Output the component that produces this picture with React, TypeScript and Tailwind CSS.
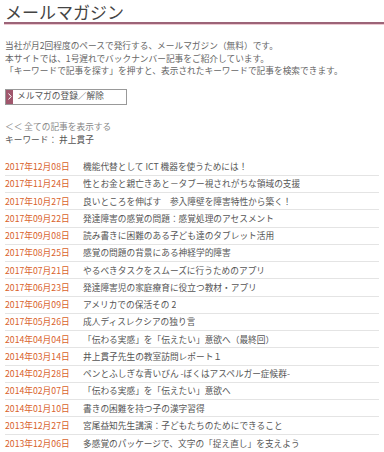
const articles: [string, string][] = [
  ["2017年12月08日", "機能代替として ICT 機器を使うためには！"],
  ["2017年11月24日", "性とお金と親亡きあと－タブー視されがちな領域の支援"],
  ["2017年10月27日", "良いところを伸ばす　参入障壁を障害特性から築く！"],
  ["2017年09月22日", "発達障害の感覚の問題：感覚処理のアセスメント"],
  ["2017年09月08日", "読み書きに困難のある子ども達のタブレット活用"],
  ["2017年08月25日", "感覚の問題の背景にある神経学的障害"],
  ["2017年07月21日", "やるべきタスクをスムーズに行うためのアプリ"],
  ["2017年06月23日", "発達障害児の家庭療育に役立つ教材・アプリ"],
  ["2017年06月09日", "アメリカでの保活その 2"],
  ["2017年05月26日", "成人ディスレクシアの独り言"],
  ["2014年04月04日", "「伝わる実感」を「伝えたい」意欲へ（最終回）"],
  ["2014年03月14日", "井上貫子先生の教室訪問レポート１"],
  ["2014年02月28日", "ペンとふしぎな青いびん -ぼくはアスペルガー症候群-"],
  ["2014年02月07日", "「伝わる実感」を「伝えたい」意欲へ"],
  ["2014年01月10日", "書きの困難を持つ子の漢字習得"],
  ["2013年12月27日", "宮尾益知先生講演：子どもたちのためにできること"],
  ["2013年12月06日", "多感覚のパッケージで、文字の「捉え直し」を支えよう"],
];

export default function App() {
  return (
    <main
      className="min-h-screen bg-white text-[#555] text-[8.7px]"
      style={{ fontFamily: '"Noto Sans CJK JP", "Noto Sans", sans-serif' }}
    >
      <header className="pl-[4px]">
        <h1 className="pl-[1px] pt-[1px] text-[17px] leading-[21px] text-[#444]">メールマガジン</h1>
        <div className="h-[2px] bg-[#9c6478]" />
        <div className="h-[1px] bg-[#ecc8d0]" />
      </header>

      <section className="px-[5px] pt-[15px]">
        <div className="leading-[12.5px] text-[#666]">
          <p>当社が月2回程度のペースで発行する、メールマガジン（無料）です。</p>
          <p>本サイトでは、1号遅れでバックナンバー記事をご紹介しています。</p>
          <p>「キーワードで記事を探す」を押すと、表示されたキーワードで記事を検索できます。</p>
        </div>

        <a className="mt-[11px] flex h-[16px] w-[122px] items-stretch border border-[#999] bg-white">
          <span className="flex w-[7px] items-center justify-center bg-[#a0566c]">
            <svg width="4" height="7" viewBox="0 0 4 7" fill="none">
              <path d="M0.5 0.5L3.2 3.5L0.5 6.5" stroke="white" strokeWidth="1" />
            </svg>
          </span>
          <span className="flex items-center pl-[4px] leading-none text-[#555]">メルマガの登録／解除</span>
        </a>

        <div className="mt-[15px] leading-[13px]">
          <p className="text-[#888]">＜＜ 全ての記事を表示する</p>
          <p className="text-[#555]">キーワード： 井上貫子</p>
        </div>

        <ul className="mt-[13px]">
          {articles.map(([date, title], i) => (
            <li
              key={i}
              className="flex h-[17.25px] items-center border-b border-[#e4e4e4] last:border-b-0"
            >
              <span className="w-[78px] shrink-0 text-[#d9622b]">{date}</span>
              <span className="truncate text-[#555]">{title}</span>
            </li>
          ))}
        </ul>
      </section>
    </main>
  );
}
